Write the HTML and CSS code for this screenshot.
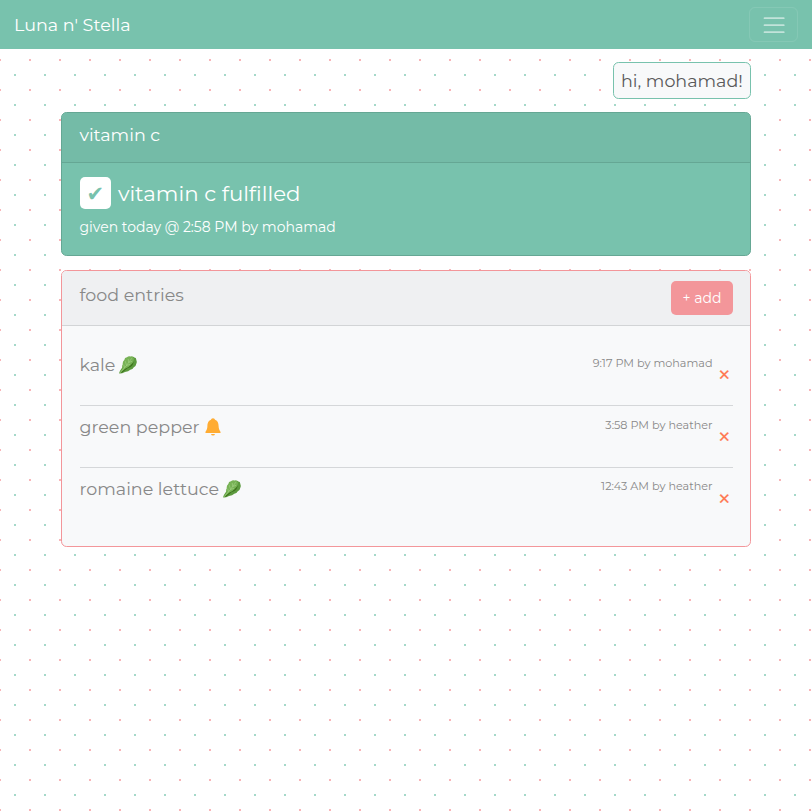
FILE: index.html
```
<!DOCTYPE html>
<html lang="en">
<head>
<meta charset="utf-8">
<title>Luna n' Stella</title>
<link rel="stylesheet" href="styles.css">
</head>
<body>
<svg class="defs" aria-hidden="true">
  <symbol id="leaf" viewBox="0 0 18 18">
    <path fill="#5c9a3e" d="M.1 17.600C.5 15 2 13.500 3.500 11L12 1.500Q14.500.2 15.300 1.600Q17.500 1.800 17.300 4Q18.300 6 17.200 8Q17 10.300 14.800 11.300Q13.800 13.500 11.300 13.700Q9.500 15.800 6 15.900Q3 17.700.1 17.600Z"/>
    <path fill="#3e721d" d="M1 17.200L6 12L11.500 9.500L14.500 5.500Q14.500 9 11.500 11Q8 12 6.500 14Q4 16.500 1 17.200Z"/>
    <path fill="#77b255" d="M.5 17.200L3.500 12.500Q2.500 10 3.800 8.200Q3.300 5.500 5.300 4Q5.500 1.500 8 1.300Q9.500-.1 11.500.5Q13.500-.1 14.300 1.200Q15.300 3 14.500 4.800Q14 7.500 11.800 8.600Q10 11.500 6.500 12.500Z"/>
    <path fill="none" stroke="#a6d388" stroke-width=".6" d="M.8 17L7.500 9.500 12.800 2.200M7.500 9.500L6.300 5.200M9.700 6.500L9.200 3M7.500 9.500L11 8.300M9.700 6.500L13 5.300M5.500 11.700L4.800 8.700"/>
  </symbol>
  <symbol id="bell" viewBox="0 0 16 18">
    <path fill="#ffac33" d="M8 .3C9.200.3 9.900 1.100 10 1.700C12.900 2.700 13.500 5.300 13.600 8C13.700 11 14.500 12.500 15.600 14Q15.900 15 15 15H1Q.1 15 .4 14C1.500 12.500 2.300 11 2.400 8C2.500 5.300 3.100 2.700 6 1.700C6.100 1.100 6.800.3 8 .3ZM6 16H10Q9.700 17.600 8 17.600T6 16Z"/>
  </symbol>
</svg>
<nav class="navbar">
  <a class="brand">Luna n' Stella</a>
  <button class="toggler" aria-label="Menu">
    <svg viewBox="0 0 30 30"><path d="M4 7h22M4 15h22M4 23h22" stroke="#fff" stroke-opacity=".55" stroke-width="2" stroke-linecap="round"/></svg>
  </button>
</nav>
<main class="container">
  <div class="greeting-row"><div class="greeting"><span>hi, mohamad!</span></div></div>
  <section class="card vitamin">
    <header class="card-header"><span>vitamin c</span></header>
    <div class="card-body">
      <div class="status"><span class="check">✔</span><span class="fulfilled">vitamin c fulfilled</span></div>
      <div class="given">given today @ 2:58 PM by mohamad</div>
    </div>
  </section>
  <section class="card food">
    <header class="card-header"><span class="food-title">food entries</span><button class="add"><span>+ add</span></button></header>
    <ul class="entries">
      <li><span>kale</span><svg class="leaf"><use href="#leaf"/></svg><span class="meta">9:17 PM by mohamad</span><span class="remove">✕</span></li>
      <li><span>green pepper</span><svg class="bell"><use href="#bell"/></svg><span class="meta">3:58 PM by heather</span><span class="remove">✕</span></li>
      <li><span>romaine lettuce</span><svg class="leaf"><use href="#leaf"/></svg><span class="meta">12:43 AM by heather</span><span class="remove">✕</span></li>
    </ul>
  </section>
</main>
</body>
</html>
```
FILE: styles.css
```
* { box-sizing: border-box; }
html { height: 100%; }
body {
  margin: 0;
  min-height: 100%;
  overflow: hidden;
  font: 400 17.5px/26px Montserrat, Inter, sans-serif;
  color: #888;
  background-color: #fff;
  background-image:
    conic-gradient(from 90deg at 28px 28px, #f8b5b8 25%, transparent 0),
    conic-gradient(from 90deg at 28px 28px, #a5d8c9 25%, transparent 0);
  background-size: 30px 30px;
  background-position: 1px 1px, 16px 16px;
}
.defs { display: none; }
button { font: inherit; padding: 0; }
span, a { white-space: nowrap; }
.navbar {
  height: 49px;
  padding: 0 14px;
  display: flex;
  align-items: center;
  justify-content: space-between;
  background: #78c2ad;
  color: #fff;
}
.toggler {
  width: 49px;
  height: 35px;
  display: flex;
  align-items: center;
  justify-content: center;
  background: none;
  border: 1px solid rgba(255, 255, 255, .1);
  border-radius: 6px;
}
.toggler svg { width: 26.25px; height: 26.25px; margin: 1px 0 0 .5px; flex: none; }
.container { width: 690px; margin: 13px auto 0; }
.greeting-row { display: flex; justify-content: flex-end; }
.greeting {
  width: 138px;
  height: 37px;
  padding: 5px 7px;
  background: #f8f9fa;
  border: 1px solid #78c2ad;
  border-radius: 5.6px;
  color: #5a5a5a;
}
.card { border: 1px solid; border-radius: 5.6px; overflow: hidden; }
.card-header { display: flex; justify-content: space-between; padding: 0 17px 0 17.5px; border-bottom: 1px solid; }
.vitamin { height: 144px; margin-top: 13px; background: #78c2ad; border-color: #65a794; color: #fff; }
.vitamin .card-header { height: 50px; padding-top: 9px; background: #74bba7; border-color: #65a794; }
.card-body { padding: 14px 17.5px; }
.status { display: flex; align-items: center; gap: 7px; height: 32px; }
.check {
  width: 31.5px;
  height: 32px;
  border-radius: 5px;
  background: #fff;
  color: #78c2ad;
  font: 21px/34px "DejaVu Sans", sans-serif;
  text-align: center;
}
.fulfilled { font-size: 21.3px; }
.given { margin-top: 7px; font-size: 14px; line-height: 22px; white-space: nowrap; }
.food { height: 277px; margin-top: 14px; background: #f8f9fa; border-color: #f3969a; }
.food .card-header { height: 55px; padding-top: 10px; background: #eff0f2; border-color: #d2d4d6; }
.food-title { margin-top: 1px; }
.add {
  width: 62px;
  height: 34px;
  border: 0;
  border-radius: 5px;
  background: #f3969a;
  color: #fff;
  font-size: 14px;
}
.entries { list-style: none; margin: 17px 17px 0 17.5px; padding: 0; }
.entries li { display: flex; height: 62px; padding-top: 8px; border-bottom: 1px solid #d5d7d9; }
.entries li:first-child { height: 63px; padding-top: 9px; }
.entries li:last-child { border: 0; }
.leaf { width: 18px; height: 18px; margin: 4px 0 0 4px; }
.bell { width: 16px; height: 18px; margin: 4px 0 0 5px; }
.meta { margin: 4px 0 0 auto; font-size: 11.2px; line-height: 14px; color: #888; }
.entries li:last-child .meta { margin-top: 3px; }
.remove {
  width: 20.5px;
  padding-left: 5.5px;
  margin-top: 10px;
  font: 15px/26px "DejaVu Sans", sans-serif;
  -webkit-text-stroke: .2px;
  color: #ff7851;
}
```
